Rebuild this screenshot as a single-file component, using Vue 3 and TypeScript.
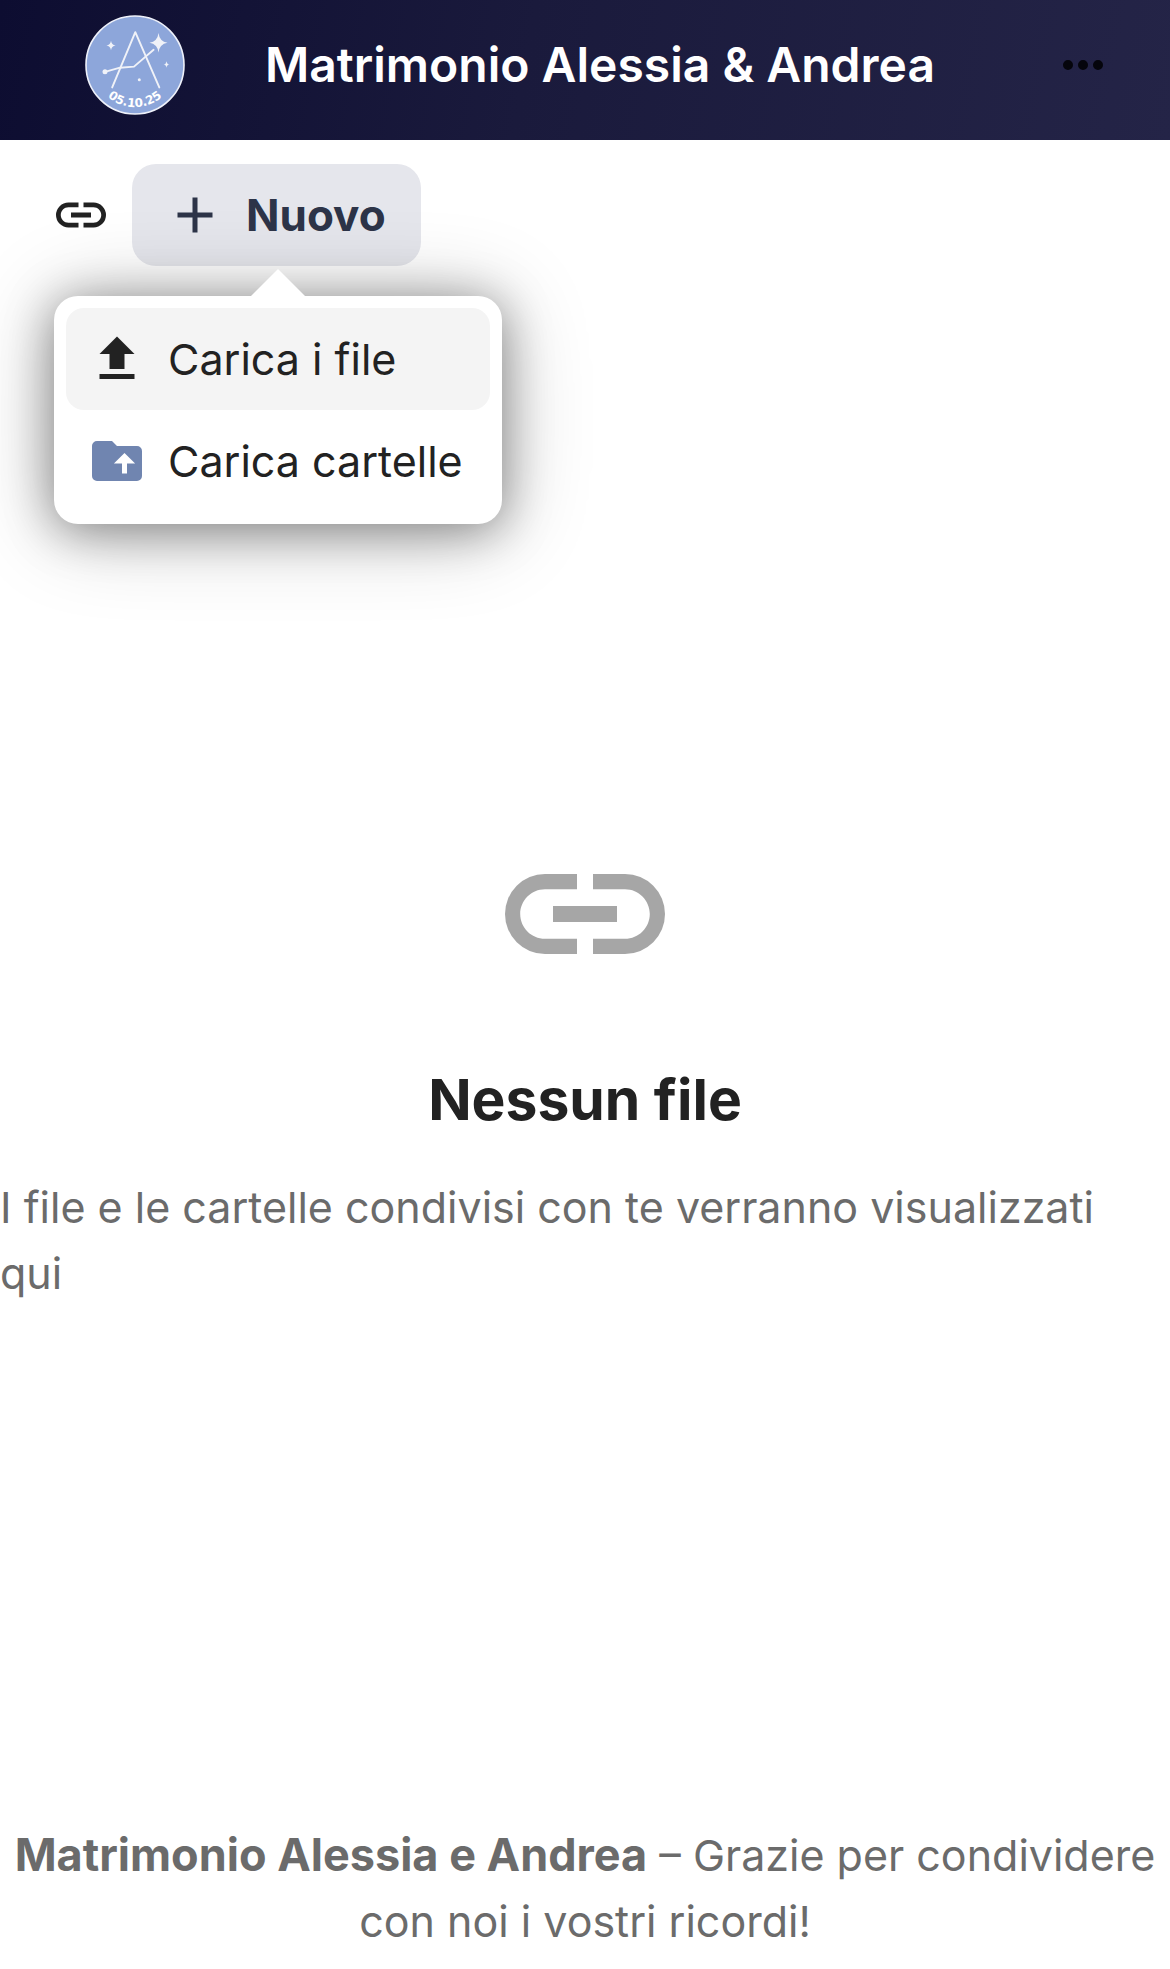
<script setup lang="ts">
import { ref } from 'vue'

interface MenuEntry {
  id: string
  label: string
  path: string
  folder: boolean
}

const linkPath =
  'M3.9,12C3.9,10.29 5.29,8.9 7,8.9H11V7H7A5,5 0 0,0 2,12A5,5 0 0,0 7,17H11V15.1H7C5.29,15.1 3.9,13.71 3.9,12M8,13H16V11H8V13M17,7H13V8.9H17C18.71,8.9 20.1,10.29 20.1,12C20.1,13.71 18.71,15.1 17,15.1H13V17H17A5,5 0 0,0 22,12A5,5 0 0,0 17,7Z'

const entries: MenuEntry[] = [
  {
    id: 'files',
    label: 'Carica i file',
    path: 'M9,16V10H5L12,3L19,10H15V16H9M5,20V18H19V20H5Z',
    folder: false,
  },
  {
    id: 'folders',
    label: 'Carica cartelle',
    path: 'M20,6A2,2 0 0,1 22,8V18A2,2 0 0,1 20,20H4A2,2 0 0,1 2,18V6A2,2 0 0,1 4,4H10L12,6H20M10.75,13H14V17H16V13H19.25L15,8.75',
    folder: true,
  },
]

const menuOpen = ref(true)
const active = ref('files')
</script>

<template>
  <div class="page">
    <header class="header">
      <a class="logo" href="#" aria-label="Home">
        <svg viewBox="0 0 100 100" width="100" height="100">
          <defs>
            <path id="date-arc" d="M8,50A42,42 0 0,0 92,50" />
          </defs>
          <circle cx="50" cy="50" r="49" fill="#8da6da" stroke="#eef1fa" stroke-width="1.6" />
          <g fill="none" stroke="#f0f2f8" stroke-width="1.9" stroke-linecap="round" stroke-linejoin="round">
            <path d="M27.2,72.4L50.3,17.2L74.3,72.4" />
            <path d="M20,56.8L35,52.7L49,51.6L68.6,34.8" />
          </g>
          <g fill="#f0f2f8">
            <circle cx="20" cy="56.8" r="2.5" />
            <circle cx="54.3" cy="64.8" r="1.5" />
            <path d="M73.5,18Q74.5,26.5 82.5,27.7Q74.5,29 73.5,37.5Q72.5,29 64.5,27.7Q72.5,26.5 73.5,18Z" />
            <path d="M26,25.8Q26.5,30 30.6,30.5Q26.5,31 26,35.3Q25.5,31 21.4,30.5Q25.5,30 26,25.8Z" />
            <path d="M81.5,46.3Q81.8,49.2 84.4,49.5Q81.8,49.8 81.5,52.7Q81.2,49.8 78.6,49.5Q81.2,49.2 81.5,46.3Z" />
          </g>
          <text class="logo-date" text-anchor="middle">
            <textPath href="#date-arc" startOffset="50%">05.10.25</textPath>
          </text>
        </svg>
      </a>
      <h1 class="title">Matrimonio Alessia &amp; Andrea</h1>
      <button class="more" type="button" aria-label="Altre azioni">
        <svg viewBox="0 0 24 24" width="60" height="60">
          <path d="M16,12A2,2 0 0,1 18,10A2,2 0 0,1 20,12A2,2 0 0,1 18,14A2,2 0 0,1 16,12M10,12A2,2 0 0,1 12,10A2,2 0 0,1 14,12A2,2 0 0,1 12,14A2,2 0 0,1 10,12M4,12A2,2 0 0,1 6,10A2,2 0 0,1 8,12A2,2 0 0,1 6,14A2,2 0 0,1 4,12Z" />
        </svg>
      </button>
    </header>

    <nav class="toolbar">
      <a class="crumb" href="#" aria-label="Condivisione">
        <svg viewBox="0 0 24 24" width="60" height="60"><path :d="linkPath" /></svg>
      </a>
      <div class="new">
        <button class="new-button" type="button" aria-haspopup="menu" :aria-expanded="menuOpen" @click="menuOpen = !menuOpen">
          <svg viewBox="0 0 24 24" width="60" height="60"><path d="M19,13H13V19H11V13H5V11H11V5H13V11H19V13Z" /></svg>
          <span>Nuovo</span>
        </button>
        <div v-if="menuOpen" class="popover">
          <ul class="menu" role="menu">
            <li v-for="entry in entries" :key="entry.id" role="none">
              <button
                class="menu-item"
                :class="{ active: active === entry.id }"
                type="button"
                role="menuitem"
                @mouseenter="active = entry.id"
              >
                <svg viewBox="0 0 24 24" width="60" height="60" :class="{ folder: entry.folder }"><path :d="entry.path" /></svg>
                <span>{{ entry.label }}</span>
              </button>
            </li>
          </ul>
        </div>
      </div>
    </nav>

    <main class="empty">
      <svg class="empty-icon" viewBox="0 0 24 24" width="192" height="192"><path :d="linkPath" /></svg>
      <h2 class="empty-title">Nessun file</h2>
      <p class="empty-text">I file e le cartelle condivisi con te verranno visualizzati qui</p>
    </main>

    <footer class="footer">
      <p><strong>Matrimonio Alessia e Andrea</strong> – Grazie per condividere con noi i vostri ricordi!</p>
    </footer>
  </div>
</template>

<style>
body {
  margin: 0;
  background: #fff;
}
</style>

<style scoped>
.page {
  display: flex;
  flex-direction: column;
  min-height: 100vh;
  color: #222;
  font-family: Inter, "Liberation Sans", sans-serif;
  font-size: 43px;
  line-height: 66px;
}

h1,
h2,
p,
ul {
  margin: 0;
  padding: 0;
}

button {
  border: 0;
  background: none;
  color: inherit;
  font: inherit;
  cursor: pointer;
}

svg {
  display: block;
  flex: none;
  fill: currentColor;
}

.header {
  display: flex;
  align-items: center;
  box-sizing: border-box;
  height: 140px;
  padding: 0 57px 10px 85px;
  background: linear-gradient(100deg, #0d0d31 0%, #1a1a3c 45%, #242447 100%);
}

.logo-date {
  fill: #fff;
  font: bold 12px "DejaVu Sans", sans-serif;
}

.title {
  flex: 1;
  margin-left: 80px;
  color: #fff;
  font-size: 48px;
  font-weight: 600;
  white-space: nowrap;
}

.more {
  padding: 0;
  color: #05050c;
}

.toolbar {
  display: flex;
  align-items: center;
  gap: 21px;
  padding: 24px 51px 0;
}

.crumb {
  color: #222;
}

.new {
  position: relative;
}

.new-button {
  display: flex;
  align-items: center;
  gap: 21px;
  height: 102px;
  padding: 0 35px 0 33px;
  border-radius: 24px;
  background: #e5e6ec;
  color: #2d3448;
  font-size: 44px;
  font-weight: 700;
}

.popover {
  position: absolute;
  z-index: 1;
  top: 132px;
  left: -78px;
  width: 448px;
  border-radius: 24px;
  background: #fff;
  box-shadow: 0 6px 48px rgba(0, 0, 0, 0.4), 0 6px 90px rgba(0, 0, 0, 0.24);
}

.popover::before {
  position: absolute;
  top: -27px;
  left: 197px;
  border: 27px solid transparent;
  border-top: 0;
  border-bottom-color: #fff;
  content: "";
}

.menu {
  padding: 12px;
  list-style: none;
}

.menu-item {
  display: flex;
  align-items: center;
  gap: 21px;
  width: 100%;
  height: 102px;
  padding: 0 21px;
  border-radius: 18px;
  white-space: nowrap;
}

.menu-item.active {
  background: #f4f4f4;
}

.folder {
  color: #7085b0;
}

.empty {
  display: flex;
  flex: 1;
  flex-direction: column;
  align-items: center;
  justify-content: center;
  padding-top: 36px;
}

.empty-icon {
  opacity: 0.4;
}

.empty-title {
  margin: 54px 0 38px;
  font-size: 57px;
  font-weight: 700;
  line-height: 72px;
}

.empty-text {
  box-sizing: border-box;
  width: 100%;
  padding-right: 12px;
  color: #6b6b6b;
}

.footer {
  padding: 0 12px 15px;
  color: #6b6b6b;
  text-align: center;
}

.footer strong {
  font-size: 45px;
}
</style>
